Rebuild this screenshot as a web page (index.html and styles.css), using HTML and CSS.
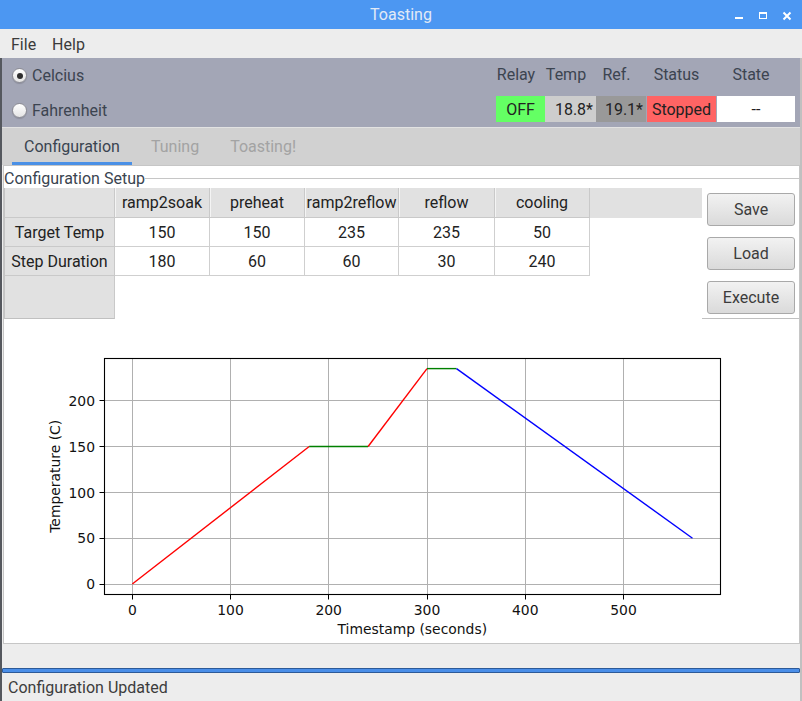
FILE: index.html
```html
<!DOCTYPE html>
<html>
<head>
<meta charset="utf-8">
<title>Toasting</title>
<link rel="stylesheet" href="styles.css">
</head>
<body>
<div class="titlebar">
  <span></span>
  <span class="title">Toasting</span>
  <svg class="winbtns" width="64" height="29" viewBox="0 0 64 29">
    <rect x="5" y="17" width="8" height="2" fill="#fff"/>
    <rect x="29.5" y="12.5" width="7" height="6" fill="none" stroke="#fff" stroke-width="1"/>
    <rect x="29" y="12" width="8" height="2" fill="#fff"/>
    <path d="M53.5 12.5 L60.5 19.5 M60.5 12.5 L53.5 19.5" stroke="#fff" stroke-width="2" fill="none"/>
  </svg>
</div>
<div class="menubar">
  <span class="menu">File</span>
  <span class="menu">Help</span>
</div>
<div class="main">
  <div class="toppanel">
    <div class="units">
      <label class="radio"><span class="dot checked"></span>Celcius</label>
      <label class="radio"><span class="dot"></span>Fahrenheit</label>
    </div>
    <div class="readouts">
      <span class="rlabel">Relay</span>
      <span class="rlabel">Temp</span>
      <span class="rlabel">Ref.</span>
      <span class="rlabel">Status</span>
      <span class="rlabel">State</span>
      <span class="rval relay">OFF</span>
      <span class="rval temp">18.8*</span>
      <span class="rval ref">19.1*</span>
      <span class="rval status">Stopped</span>
      <span class="rval state">--</span>
    </div>
  </div>
  <div class="tabbar">
    <span class="tab active">Configuration</span>
    <span class="tab disabled">Tuning</span>
    <span class="tab disabled">Toasting!</span>
  </div>
  <div class="pane">
    <div class="legend"><span class="legend-text">Configuration Setup</span><span class="legend-line"></span></div>
    <div class="setup">
      <div class="table">
        <div class="hcell corner"></div>
        <div class="hcell">ramp2soak</div>
        <div class="hcell">preheat</div>
        <div class="hcell">ramp2reflow</div>
        <div class="hcell">reflow</div>
        <div class="hcell">cooling</div>
        <div class="hcell filler"></div>

        <div class="rhead">Target Temp</div>
        <div class="cell">150</div>
        <div class="cell">150</div>
        <div class="cell">235</div>
        <div class="cell">235</div>
        <div class="cell">50</div>
        <div class="blank"></div>

        <div class="rhead">Step Duration</div>
        <div class="cell">180</div>
        <div class="cell">60</div>
        <div class="cell">60</div>
        <div class="cell">30</div>
        <div class="cell">240</div>
        <div class="blank"></div>

        <div class="rhead rest"></div>
        <div class="blank span6"></div>
      </div>
      <div class="buttons">
        <button class="btn">Save</button>
        <button class="btn">Load</button>
        <button class="btn">Execute</button>
      </div>
    </div>
    <div class="chart">
      <svg width="795" height="324" viewBox="4 319 795 324" font-family="DejaVu Sans, sans-serif" font-size="13.9">
        <g stroke="#b0b0b0" stroke-width="1">
          <line x1="132.5" y1="358.5" x2="132.5" y2="594"/>
          <line x1="230.5" y1="358.5" x2="230.5" y2="594"/>
          <line x1="328.5" y1="358.5" x2="328.5" y2="594"/>
          <line x1="427.5" y1="358.5" x2="427.5" y2="594"/>
          <line x1="525.5" y1="358.5" x2="525.5" y2="594"/>
          <line x1="623.5" y1="358.5" x2="623.5" y2="594"/>
          <line x1="104.5" y1="584.5" x2="720" y2="584.5"/>
          <line x1="104.5" y1="538.5" x2="720" y2="538.5"/>
          <line x1="104.5" y1="492.5" x2="720" y2="492.5"/>
          <line x1="104.5" y1="446.5" x2="720" y2="446.5"/>
          <line x1="104.5" y1="400.5" x2="720" y2="400.5"/>
        </g>
        <g fill="none" stroke-width="1.4">
          <polyline points="132.3,584 309.2,446.5" stroke="#ff0000"/>
          <polyline points="309.2,446.5 368.1,446.5" stroke="#008000"/>
          <polyline points="368.1,446.5 427,368.6" stroke="#ff0000"/>
          <polyline points="427,368.6 456.5,368.6" stroke="#008000"/>
          <polyline points="456.5,368.6 692.5,538.2" stroke="#0000ff"/>
        </g>
        <rect x="104.5" y="358.5" width="616" height="236" fill="none" stroke="#000" stroke-width="1.1"/>
        <g stroke="#000" stroke-width="1">
          <line x1="132.5" y1="595" x2="132.5" y2="599.5"/>
          <line x1="230.5" y1="595" x2="230.5" y2="599.5"/>
          <line x1="328.5" y1="595" x2="328.5" y2="599.5"/>
          <line x1="427.5" y1="595" x2="427.5" y2="599.5"/>
          <line x1="525.5" y1="595" x2="525.5" y2="599.5"/>
          <line x1="623.5" y1="595" x2="623.5" y2="599.5"/>
          <line x1="99.5" y1="584.5" x2="104" y2="584.5"/>
          <line x1="99.5" y1="538.5" x2="104" y2="538.5"/>
          <line x1="99.5" y1="492.5" x2="104" y2="492.5"/>
          <line x1="99.5" y1="446.5" x2="104" y2="446.5"/>
          <line x1="99.5" y1="400.5" x2="104" y2="400.5"/>
        </g>
        <g fill="#111" text-anchor="middle">
          <text x="132.3" y="615">0</text>
          <text x="230.5" y="615">100</text>
          <text x="328.7" y="615">200</text>
          <text x="427" y="615">300</text>
          <text x="525.3" y="615">400</text>
          <text x="623.5" y="615">500</text>
          <text x="412.3" y="634">Timestamp (seconds)</text>
        </g>
        <g fill="#111" text-anchor="end">
          <text x="95" y="589.3">0</text>
          <text x="95" y="543.4">50</text>
          <text x="95" y="497.5">100</text>
          <text x="95" y="451.6">150</text>
          <text x="95" y="405.7">200</text>
        </g>
        <text fill="#111" text-anchor="middle" transform="translate(60,476.3) rotate(-90)">Temperature (C)</text>
      </svg>
    </div>
  </div>
  <div class="progress"></div>
  <div class="statusbar">Configuration Updated</div>
</div>
</body>
</html>
```

FILE: styles.css
```css
* { box-sizing: border-box; }
html, body { margin: 0; padding: 0; }
body {
  width: 802px;
  height: 701px;
  overflow: hidden;
  background: #ededed;
  font-family: Roboto, "Liberation Sans", sans-serif;
  font-size: 16px;
  color: #333;
}

.titlebar {
  height: 29px;
  background: #4c97f2;
  display: grid;
  grid-template-columns: 1fr auto 1fr;
  align-items: center;
}
.title {
  color: #e2eaf6;
  font-size: 16px;
  line-height: 29px;
}
.winbtns {
  justify-self: end;
  margin-right: 8px;
  display: block;
}

.menubar {
  height: 29px;
  display: flex;
  align-items: center;
  gap: 16px;
  padding-left: 11px;
  padding-top: 2px;
  color: #3b3b3b;
}

.main {
  border-left: 2px solid #55585e;
  border-right: 2px solid #c0c0c0;
  height: 643px;
}

.toppanel {
  height: 69px;
  background: #a3a6b6;
  display: flex;
  justify-content: space-between;
  color: #3c4450;
}
.units {
  display: flex;
  flex-direction: column;
  padding-left: 10px;
}
.radio {
  display: flex;
  align-items: center;
  gap: 5px;
  height: 35px;
}
.radio + .radio { height: 34px; }
.dot {
  width: 15px;
  height: 15px;
  border-radius: 50%;
  border: 1px solid #8c8c94;
  background: linear-gradient(#ffffff, #e4e4e4);
  box-shadow: 0 1px 1px rgba(0,0,0,0.15);
  display: flex;
  align-items: center;
  justify-content: center;
}
.dot.checked::after {
  content: "";
  width: 6px;
  height: 6px;
  border-radius: 50%;
  background: #2e2e2e;
}

.readouts {
  display: grid;
  grid-template-columns: 49px 51px 50px 70px 79px;
  grid-template-rows: 32px 26px;
  row-gap: 6px;
  margin-right: 5px;
}
.rlabel {
  display: flex;
  align-items: center;
  justify-content: center;
  padding-right: 9px;
  white-space: nowrap;
}
.rval {
  display: flex;
  align-items: center;
  justify-content: center;
  color: #222;
  white-space: nowrap;
}
.relay { background: #64ff64; }
.temp { background: #cdcdcd; justify-content: flex-end; padding-right: 3px; }
.ref { background: #999999; justify-content: flex-end; padding-right: 3px; }
.status { background: #ff6464; margin-left: 1px; }
.state { background: #ffffff; margin-left: 1px; }

.tabbar {
  height: 38px;
  background: #d1d1d1;
  border-top: 1px solid #e2e2e2;
  display: flex;
  gap: 7px;
  padding-left: 10px;
}
.tab {
  padding: 3px 12px 0 12px;
  height: 37px;
  display: flex;
  align-items: center;
  border-bottom: 3px solid transparent;
}
.tab.active {
  color: #3a4450;
  border-bottom-color: #4a90e6;
  padding-right: 12px;
}
.tab.disabled { color: #a3a3a3; }

.pane {
  margin-left: 1px;
  width: 797px;
  height: 479px;
  background: #fff;
  border: 1px solid #c6c6c6;
}
.legend {
  height: 22px;
  display: flex;
  align-items: center;
}
.legend-text {
  color: #3a4450;
  line-height: 18px;
  padding-top: 3px;
}
.legend-line {
  flex: 1;
  border-top: 1px solid #c6c6c6;
  margin-top: 2px;
}

.setup {
  display: flex;
  height: 131px;
}
.table {
  width: 698px;
  display: grid;
  grid-template-columns: 110px 95px 95px 94px 96px 95px 112px;
  grid-template-rows: 30px 29px 29px 43px;
  border-left: 1px solid #c4c4c4;
  color: #222;
}
.hcell {
  background: #e1e1e1;
  border-right: 1px solid #c9c9c9;
  border-bottom: 1px solid #c9c9c9;
  box-shadow: inset 1px 0 0 #f4f4f4;
  display: flex;
  align-items: center;
  justify-content: center;
  white-space: nowrap;
}
.hcell.corner { box-shadow: none; }
.hcell.filler {
  border-right: none;
  border-bottom: none;
  box-shadow: none;
}
.rhead {
  background: #e1e1e1;
  border-right: 1px solid #c9c9c9;
  border-bottom: 1px solid #c9c9c9;
  display: flex;
  align-items: center;
  justify-content: center;
  white-space: nowrap;
}
.rhead.rest { border-bottom: 1px solid #c0c0c0; }
.cell {
  border-right: 1px solid #cfcfcf;
  border-bottom: 1px solid #cfcfcf;
  display: flex;
  align-items: center;
  justify-content: center;
}
.blank { background: #fff; }
.span6 { grid-column: span 6; }

.buttons {
  width: 97px;
  border-bottom: 1px solid #c0c0c0;
  display: flex;
  flex-direction: column;
  gap: 11px;
  padding: 5px 4px 0 5px;
}
.btn {
  width: 88px;
  height: 33px;
  font-family: Roboto, "Liberation Sans", sans-serif;
  font-size: 16px;
  color: #3c3c3c;
  background: linear-gradient(#f2f2f2, #dadada);
  border: 1px solid #a9a9a9;
  border-radius: 3px;
  padding: 0;
  margin: 0;
}

.chart {
  height: 324px;
}
.chart svg { display: block; }

.progress {
  margin-top: 24px;
  height: 5px;
  background: #4a8ee8;
  border: 1px solid #2d5a98;
  border-radius: 1px;
}
.statusbar {
  height: 28px;
  display: flex;
  align-items: center;
  padding-left: 6px;
  color: #3c3c3c;
  padding-top: 1px;
}
```
